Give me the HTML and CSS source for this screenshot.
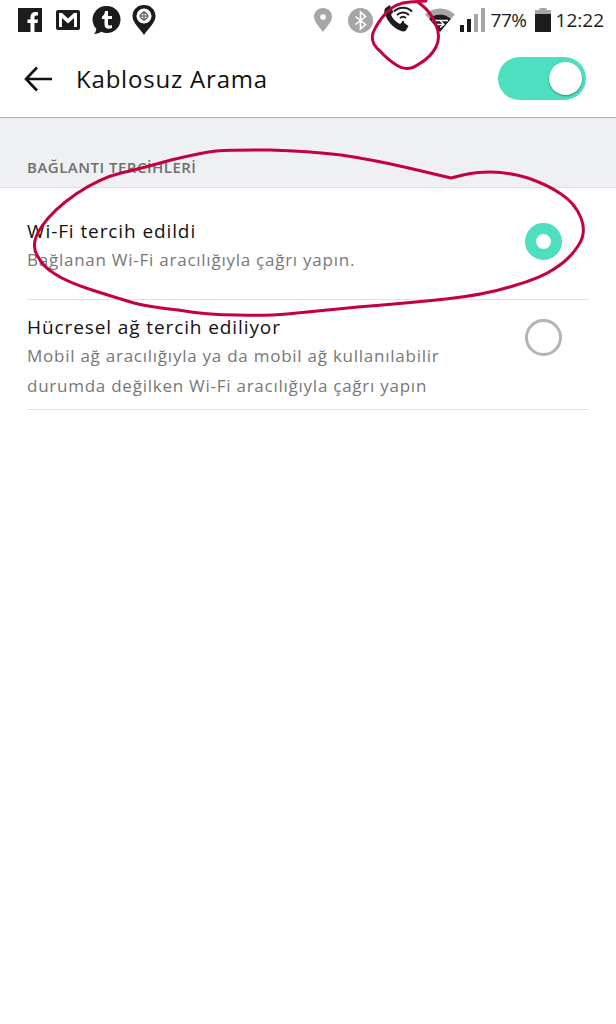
FILE: index.html
```html
<!DOCTYPE html>
<html lang="tr">
<head>
    <meta charset="UTF-8">
    <meta name="viewport" content="width=device-width, initial-scale=1.0">
    <title>Kablosuz Arama</title>
    <link rel="stylesheet" href="styles.css">
</head>
<body>
    <div id="screen">
        <!-- Status bar -->
        <div class="status-bar">
            <div class="status-left">
                <svg class="icon-f" viewBox="0 0 24 24"><path fill="#1c1c1c" d="M0 0h24v24H0z"/><path fill="#fff" d="M16.500 24v-9h3l.5-3.600h-3.500V9.300c0-1 .4-1.800 1.900-1.800H20V4.200c-.6-.1-1.600-.2-2.600-.2-2.900 0-4.900 1.700-4.900 4.900v2.500H9.500V15h3v9z"/></svg>
                <svg class="icon-m" viewBox="0 0 24 20"><rect width="24" height="20" rx="2" fill="#1c1c1c"/><path fill="#fff" d="M3 3h3l6 5.500L18 3h3v14h-3V8l-6 5.500L6 8v9H3z"/></svg>
                <svg class="icon-t" viewBox="0 0 29 28"><path fill="#1c1c1c" d="M15 0a13.500 13.500 0 0 1 0 27c-2 0-4-.4-5.500-1.200C7.500 27 5 28 2 28c1.300-1.300 2.200-3 2.300-5.200A13.500 13.500 0 0 1 15 0z"/><path fill="#fff" d="M13 5h3v5h4v3h-4v5c0 1.500 1.500 2 4 1v3c-4 1.500-7.500.5-7.500-3.500V13H10v-2.500c1.700-.6 2.700-2.800 3-5.500z"/></svg>
                <svg class="icon-pin" viewBox="0 0 24 30"><path fill="#1c1c1c" d="M12 0c6.600 0 11.500 4.800 11.500 11 0 7-6.500 11.500-11.500 19C7 22.500.5 18 .5 11 .5 4.800 5.400 0 12 0z"/><circle cx="12" cy="11" r="7.500" fill="#fff"/><circle cx="12" cy="11" r="3.300" fill="none" stroke="#555" stroke-width="1.200"/><path stroke="#555" stroke-width="1.200" d="M12 6v10M7 11h10"/></svg>
            </div>
            <div class="status-right">
                <svg class="icon-loc" viewBox="0 0 18 24"><path fill="#a6a6a6" d="M9 0c5 0 9 3.800 9 8.600C18 14 12.500 19 9 24 5.500 19 0 14 0 8.600 0 3.800 4 0 9 0z"/><circle cx="9" cy="9" r="2.800" fill="#fff"/></svg>
                <svg class="icon-bt" viewBox="0 0 25 25"><circle cx="12.500" cy="12.500" r="12.500" fill="#a6a6a6"/><path fill="none" stroke="#fff" stroke-width="1.600" d="M7.500 8.500l10 8-5 4.500V4l5 4.500-10 8"/></svg>
                <svg class="icon-call" viewBox="0 0 30 28"><path fill="#1c1c1c" d="M1 3.500 5.500 0l4 7-2.500 2.500c1.500 4 4.500 7.500 9 9.500l2.500-2.200 6 4.300-3 5c-1.500.7-3.500.4-5.500-.6C8.500 22.500 2.500 15 .5 8 .2 6.300.3 4.700 1 3.500z"/><path fill="none" stroke="#1c1c1c" stroke-width="2" d="M10 6.500c5-5 13-5 18 0M13 10c3.300-3.300 8.700-3.300 12 0M16 13c1.700-1.500 4.300-1.500 6 0"/><circle cx="19" cy="17" r="1.200" fill="#1c1c1c"/></svg>
                <svg class="icon-wifi" viewBox="0 0 30 24"><path fill="#a6a6a6" d="M0 6.500C8-1.500 22-1.500 30 6.500l-4 4.300C19 5 11 5 4 10.800z"/><path fill="#1c1c1c" d="M4 10.800c7-5.800 15-5.800 22 0L15 24z"/><path fill="none" stroke="#fff" stroke-width="1.300" d="M7 12.500h16M15 12.500l4 4-4 3M11 16.500h8"/></svg>
                <svg class="icon-signal" viewBox="0 0 25 24"><rect x="0" y="17" width="4" height="7" fill="#1c1c1c"/><rect x="7" y="11" width="4" height="13" fill="#1c1c1c"/><rect x="14" y="6" width="4" height="18" fill="#a6a6a6"/><rect x="21" y="0" width="4" height="24" fill="#a6a6a6"/></svg>
                <span class="status-text pct">77%</span>
                <svg class="icon-batt" viewBox="0 0 16 24"><rect x="4.500" width="7" height="3" fill="#a6a6a6"/><rect y="2" width="16" height="4" fill="#a6a6a6"/><rect y="6" width="16" height="18" fill="#1c1c1c"/></svg>
                <span class="status-text clock">12:22</span>
            </div>
        </div>

        <!-- Toolbar -->
        <div class="toolbar">
            <svg class="back" viewBox="0 0 28 26"><path fill="none" stroke="#111" stroke-width="2.600" d="M28 13H2M13 1.500 2 13l11 11.500"/></svg>
            <h1 class="title">Kablosuz Arama</h1>
            <div class="switch"><span class="knob"></span></div>
        </div>

        <div class="section-head">BAĞLANTI TERCİHLERİ</div>

        <div class="list">
            <div class="row row-one">
                <div class="row-text">
                    <div class="row-title">Wi-Fi tercih edildi</div>
                    <div class="row-sub">Bağlanan Wi-Fi aracılığıyla çağrı yapın.</div>
                </div>
                <span class="radio radio-on"></span>
            </div>
            <div class="row row-two">
                <div class="row-text">
                    <div class="row-title">Hücresel ağ tercih ediliyor</div>
                    <div class="row-sub">Mobil ağ aracılığıyla ya da mobil ağ kullanılabilir<br>durumda değilken Wi-Fi aracılığıyla çağrı yapın</div>
                </div>
                <span class="radio"></span>
            </div>
        </div>

        <!-- Red pen marks drawn over the screenshot -->
        <svg class="pen" viewBox="0 0 616 1024">
            <path d="M451 178L413 169Q375 160 341 155Q308 151 270 150Q233 150 216 151Q200 153 171 160Q143 168 121 173Q100 178 76 194Q53 210 42 226Q30 243 37 255Q43 267 55 274Q67 282 92 290Q117 298 134 303Q150 307 178 310Q207 315 237 315Q267 316 287 314Q308 312 358 307Q408 303 446 299Q485 295 513 286Q541 278 554 269Q569 260 578 246Q587 233 581 218Q575 203 561 194Q548 185 528 178Q508 172 491 172Q475 172 463 175L451 178"/>
            <path d="M426 1L410 2Q395 3 386 13Q377 23 373 33Q370 43 380 51Q388 60 398 66Q408 72 419 64Q431 57 436 47Q441 37 436 25Q431 13 424 7L418 2"/>
        </svg>
    </div>
</body>
</html>
```

FILE: styles.css
```css
html, body {
    margin: 0;
    background-color: #fff;
}
#screen {
    position: relative;
    width: 616px;
    height: 1024px;
    overflow: hidden;
    background-color: #fff;
    font-family: "Open Sans", sans-serif;
}
.status-bar {
    display: flex;
    justify-content: space-between;
    align-items: center;
    height: 40px;
    padding: 0 12px 0 18px;
}
.status-left, .status-right {
    display: flex;
    align-items: center;
}
.status-left {
    gap: 12px;
}
.status-bar svg {
    display: block;
}
.icon-f { width: 24px; height: 24px; }
.icon-m { width: 24px; height: 20px; margin-left: 2px; }
.icon-t { width: 29px; height: 28px; }
.icon-pin { width: 24px; height: 30px; margin-left: -1px; }
.icon-loc { width: 18px; height: 24px; }
.icon-bt { width: 25px; height: 25px; margin-left: 16px; }
.icon-call { width: 30px; height: 28px; margin-left: 11px; margin-top: -2px; }
.icon-wifi { width: 30px; height: 24px; margin-left: 11px; }
.icon-signal { width: 25px; height: 24px; margin-left: 5px; }
.icon-batt { width: 16px; height: 24px; margin-left: 8px; }
.status-text {
    font-size: 19px;
    color: #1c1c1c;
    white-space: nowrap;
}
.pct { margin-left: 6px; letter-spacing: -0.5px; }
.clock { margin-left: 5px; }
.toolbar {
    display: flex;
    align-items: center;
    height: 77px;
    padding: 0 30px 0 24px;
    box-shadow: 0 1px 1px rgba(0, 0, 0, 0.25);
    position: relative;
}
.back {
    width: 28px;
    height: 26px;
    flex: none;
}
.title {
    flex: 1;
    margin: 0 0 0 24px;
    font-size: 24px;
    font-weight: 500;
    color: #111;
    letter-spacing: 0.8px;
}
.switch {
    display: flex;
    align-items: center;
    justify-content: flex-end;
    width: 88px;
    height: 43px;
    padding-right: 4px;
    box-sizing: border-box;
    border-radius: 22px;
    background-color: #4ddfc0;
}
.knob {
    width: 33px;
    height: 33px;
    border-radius: 50%;
    background-color: #fff;
    box-shadow: 0 1px 2px rgba(0, 0, 0, 0.4);
}
.section-head {
    box-sizing: border-box;
    height: 71px;
    padding: 40px 27px 0;
    background-color: #eef0f4;
    border-bottom: 1px solid #e0e0e0;
    font-size: 15px;
    font-weight: 600;
    letter-spacing: 0.5px;
    color: #6f6f6f;
}
.list {
    padding: 0 27px;
}
.row {
    display: flex;
    justify-content: space-between;
    box-sizing: border-box;
    border-bottom: 1px solid #e2e2e2;
}
.row-one {
    height: 112px;
    padding-top: 30px;
}
.row-two {
    height: 110px;
    padding-top: 14px;
}
.row-title {
    font-size: 19px;
    line-height: 26px;
    letter-spacing: 0.9px;
    color: #111;
}
.row-sub {
    margin-top: 1px;
    font-size: 17px;
    line-height: 30px;
    letter-spacing: 0.75px;
    color: #777;
}
.radio {
    box-sizing: border-box;
    flex: none;
    width: 37px;
    height: 37px;
    margin-right: 27px;
    margin-top: 5px;
    border: 3px solid #b4b4b4;
    border-radius: 50%;
}
.radio-on {
    border: 11px solid #4ddfc0;
    background-color: #fff;
}
.pen {
    position: absolute;
    left: 0;
    top: 0;
    width: 616px;
    height: 1024px;
    fill: none;
    stroke: #c4003f;
    stroke-width: 3;
    stroke-linecap: round;
    stroke-linejoin: round;
    pointer-events: none;
}
```
